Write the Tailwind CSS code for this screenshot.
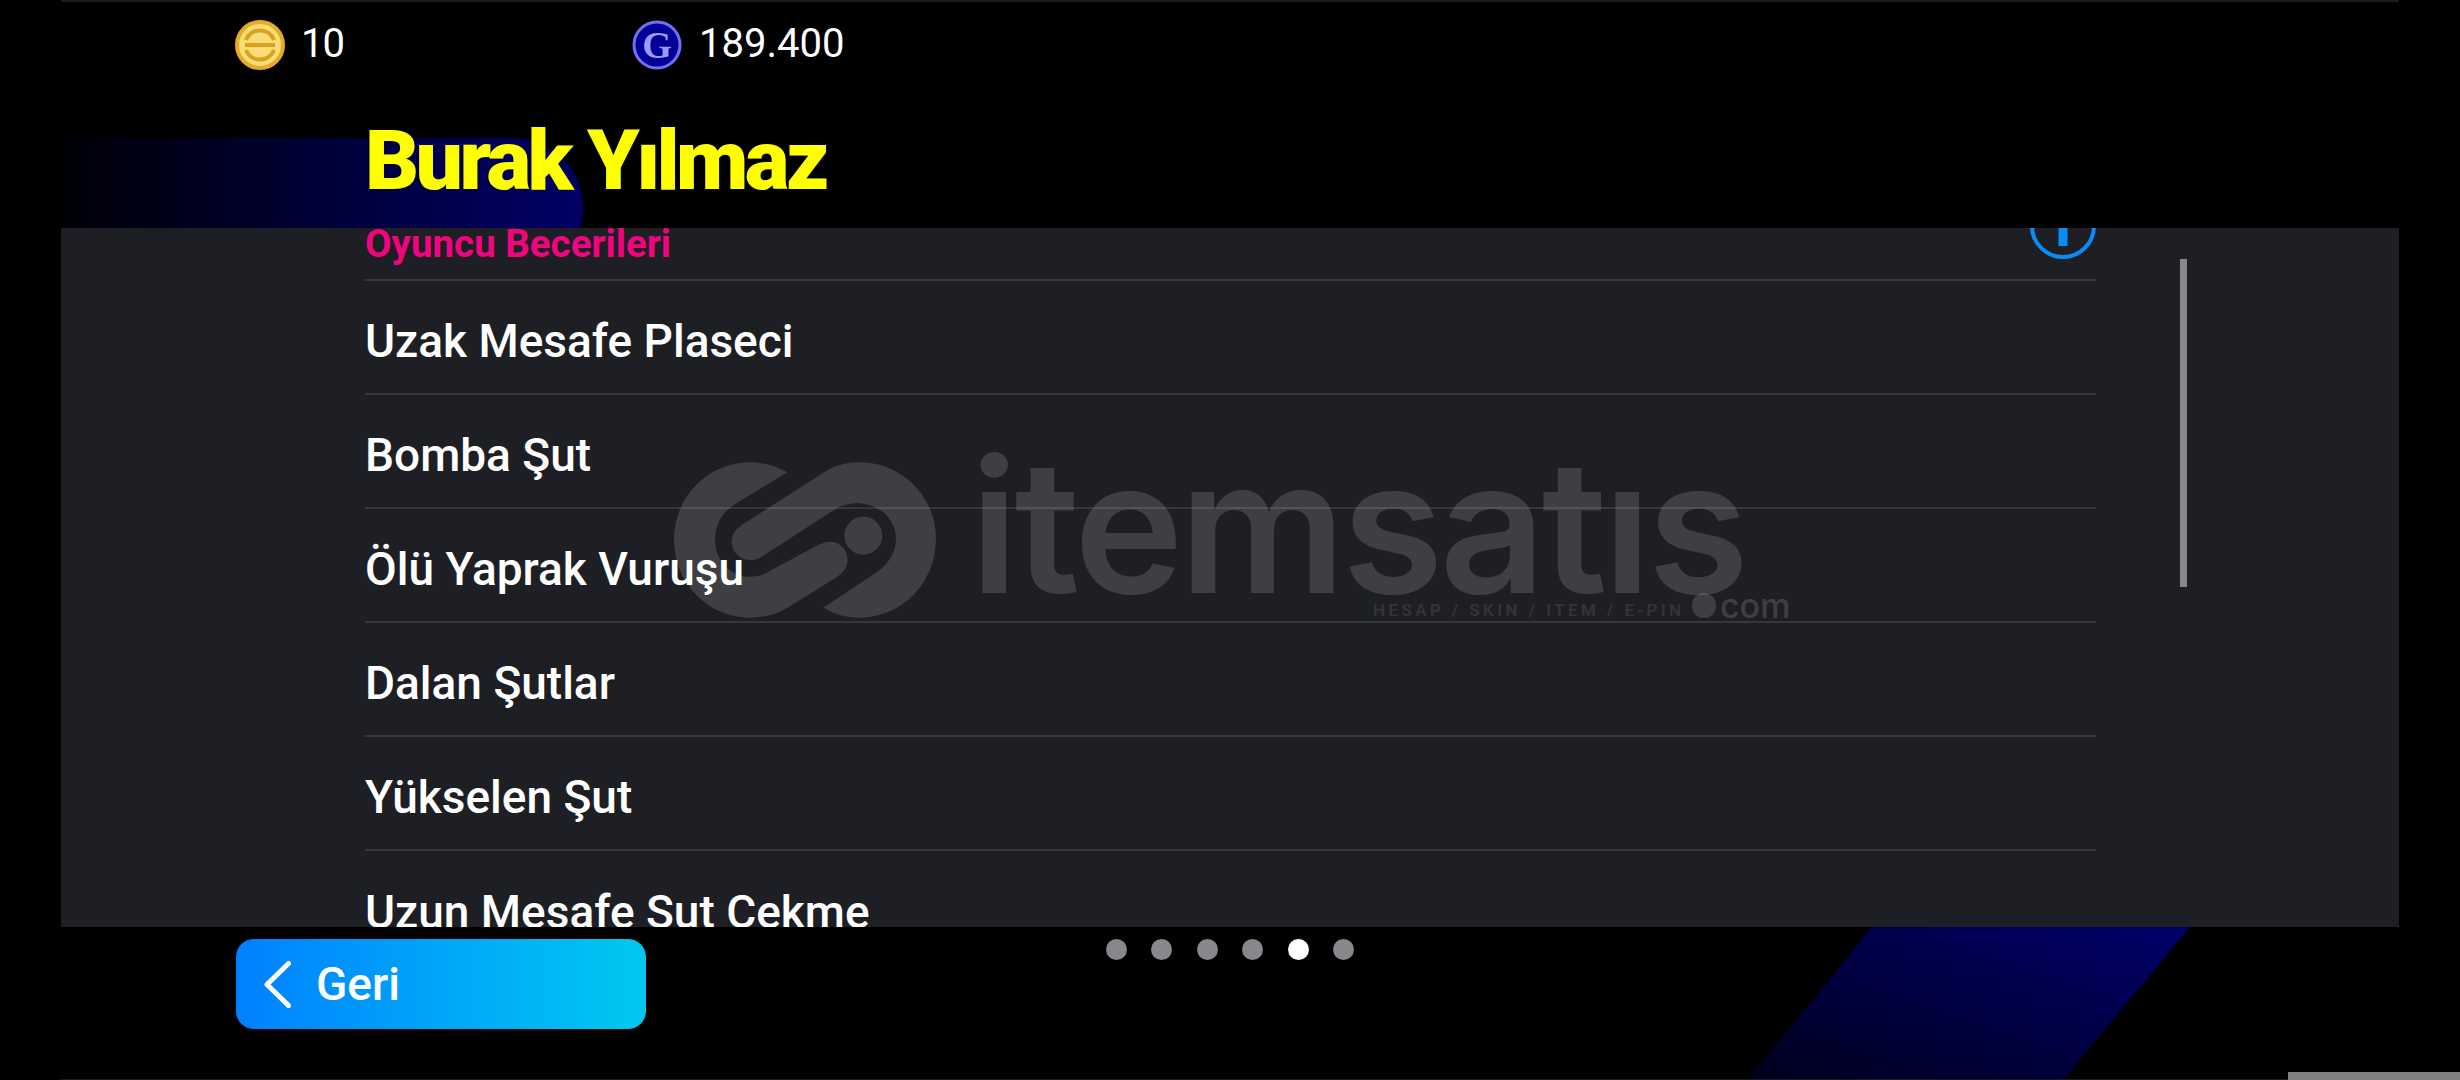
<!DOCTYPE html>
<html lang="en">
<head>
  <meta charset="UTF-8">
  <title>Burak Yılmaz</title>
  <script src="https://cdn.jsdelivr.net/npm/@tailwindcss/browser@4"></script>
</head>
<body class="bg-black">
  <div class="relative w-[2460px] h-[1080px] overflow-hidden bg-black text-white font-['Roboto',sans-serif]">
    <!-- background shapes -->
    <div class="absolute left-[61px] top-[138px] w-[522px] h-[140px] rounded-r-[70px] bg-gradient-to-r from-[#000008] via-[#000038] via-50% to-[#000066]"></div>
    <svg class="absolute left-[1748px] top-[927px]" width="442" height="153" viewBox="0 0 442 153">
      <defs>
        <linearGradient id="band" x1="0" y1="1" x2="1" y2="0">
          <stop offset="0" stop-color="#00001e" />
          <stop offset="1" stop-color="#00006a" />
        </linearGradient>
      </defs>
      <polygon points="124,0 442,0 315,153 0,153" fill="url(#band)" />
    </svg>
    <div class="absolute left-[61px] top-0 w-[2338px] h-[2px] bg-[#1a1b1d]"></div>
    <div class="absolute left-[61px] bottom-0 w-[2338px] h-px bg-[#1a1b1d]"></div>
    <div class="absolute right-0 bottom-0 w-[172px] h-[8px] bg-[#808080]"></div>

    <!-- header -->
    <header class="relative h-[228px] pl-[235px] pt-[20px]">
      <div class="flex items-center h-[50px]">
        <div class="flex items-center gap-[16px] w-[397px]">
          <svg width="50" height="50" viewBox="0 0 50 50">
            <circle cx="25" cy="25" r="23" fill="#f8dc78" stroke="#e6ac24" stroke-width="4" />
            <path d="M11 20a15 15 0 0 1 28 0M11 30a15 15 0 0 0 28 0" fill="none" stroke="#d9a21e" stroke-width="4" />
            <rect x="10" y="23" width="30" height="4" fill="#d9a21e" />
          </svg>
          <span class="text-[40px] leading-none tracking-[-1px] -mt-[3px]">10</span>
        </div>
        <div class="flex items-center gap-[17px]">
          <svg width="50" height="50" viewBox="0 0 50 50">
            <circle cx="25" cy="25" r="23" fill="#000099" stroke="#7070f0" stroke-width="3" />
            <text x="25" y="38" text-anchor="middle" font-family="Liberation Serif" font-weight="700" font-size="38" fill="#9c9cff">G</text>
          </svg>
          <span class="text-[40px] leading-none -mt-[3px]">189.400</span>
        </div>
      </div>
      <h1 class="mt-[49px] ml-[130px] text-[84px] leading-[84px] font-black tracking-[-3.6px] text-[#ffff00]">Burak Yılmaz</h1>
    </header>

    <!-- panel -->
    <main class="relative mx-[61px] h-[699px] bg-[#1e1f24] overflow-hidden">
      <div class="w-[2035px] pl-[304px]">
        <div class="flex items-end justify-between h-[53px] border-b-2 border-[#36373b]">
          <span class="text-[38.5px] leading-[44px] font-bold pb-[13px] text-[#f0047f]">Oyuncu Becerileri</span>
          <svg class="mb-[20px] shrink-0" width="66" height="66" viewBox="0 0 66 66">
            <circle cx="33" cy="33" r="31" fill="none" stroke="#0a8cf5" stroke-width="4" />
            <rect x="28.5" y="24" width="9" height="29" fill="#0a8cf5" />
          </svg>
        </div>
        <div class="flex items-center h-[114px] border-b-2 border-[#36373b] text-[46px] font-medium pt-[8px]">Uzak Mesafe Plaseci</div>
        <div class="flex items-center h-[114px] border-b-2 border-[#36373b] text-[46px] font-medium pt-[8px]">Bomba Şut</div>
        <div class="flex items-center h-[114px] border-b-2 border-[#36373b] text-[46px] font-medium pt-[8px]">Ölü Yaprak Vuruşu</div>
        <div class="flex items-center h-[114px] border-b-2 border-[#36373b] text-[46px] font-medium pt-[8px]">Dalan Şutlar</div>
        <div class="flex items-center h-[114px] border-b-2 border-[#36373b] text-[46px] font-medium pt-[8px]">Yükselen Şut</div>
        <div class="flex items-center h-[114px] text-[46px] font-medium pt-[8px]">Uzun Mesafe Şut Çekme</div>
      </div>
      <div class="absolute left-[2119px] top-[31px] w-[7px] h-[328px] bg-[#88888c]"></div>
    </main>

    <!-- footer -->
    <footer class="relative flex items-start pl-[236px] pt-[12px]">
      <button class="flex items-center w-[410px] h-[90px] pl-[28px] gap-[25px] rounded-[18px] bg-gradient-to-r from-[#0080ff] to-[#00c8f0]">
        <svg width="27" height="47" viewBox="0 0 27 47">
          <path d="M24.5 2.5 3 23.5l21.5 21" fill="none" stroke="#fff" stroke-width="5" stroke-linecap="round" stroke-linejoin="round" />
        </svg>
        <span class="text-[46px] font-medium">Geri</span>
      </button>
      <div class="flex gap-[24.4px] ml-[460px]">
        <span class="w-[21px] h-[21px] rounded-full bg-[#88888c]"></span>
        <span class="w-[21px] h-[21px] rounded-full bg-[#88888c]"></span>
        <span class="w-[21px] h-[21px] rounded-full bg-[#88888c]"></span>
        <span class="w-[21px] h-[21px] rounded-full bg-[#88888c]"></span>
        <span class="w-[21px] h-[21px] rounded-full bg-white"></span>
        <span class="w-[21px] h-[21px] rounded-full bg-[#88888c]"></span>
      </div>
    </footer>

    <!-- watermark -->
    <div class="absolute left-[660px] top-[450px] w-[1140px] h-[180px] text-white/[.14] pointer-events-none">
      <svg class="absolute left-0 top-0" width="290" height="180" viewBox="0 0 870 540" fill="currentColor">
        <path d="M382 67C345 47 310 37 270 37C145 37 42 140 42 270C42 400 145 503 270 503C310 503 345 495 380 475L525 385C550 370 563 350 563 330C563 298 538 275 510 275C495 275 482 280 470 287L325 365C310 375 290 380 270 380C210 380 165 330 165 270C165 225 185 190 220 165Z" />
        <path d="M490 473C525 493 560 503 600 503C725 503 828 400 828 265C828 140 725 37 600 37C560 37 525 47 495 65L245 225C225 240 215 255 215 275C215 305 240 330 272 330C285 330 295 327 305 320L530 175C550 165 570 160 590 160C655 160 708 205 708 265C708 305 685 345 650 367Z" />
        <circle cx="610" cy="257" r="57" />
      </svg>
      <div class="absolute left-[310px] top-0 h-[145px] overflow-hidden">
        <span class="block -mt-[34px] font-['Inter',sans-serif] text-[185px] leading-[220px] font-semibold tracking-[-4px] whitespace-nowrap">itemsatış</span>
      </div>
      <span class="absolute left-[713px] top-[150px] text-[17px] leading-[20px] tracking-[3.4px] font-medium whitespace-nowrap opacity-70">HESAP / SKIN / ITEM / E-PIN</span>
      <span class="absolute left-[1032px] top-[143px] w-[24px] h-[25px] rounded-full bg-current"></span>
      <span class="absolute left-[1060px] top-[136px] font-['Inter',sans-serif] text-[34px] leading-[40px] font-medium whitespace-nowrap">com</span>
    </div>
  </div>
</body>
</html>
